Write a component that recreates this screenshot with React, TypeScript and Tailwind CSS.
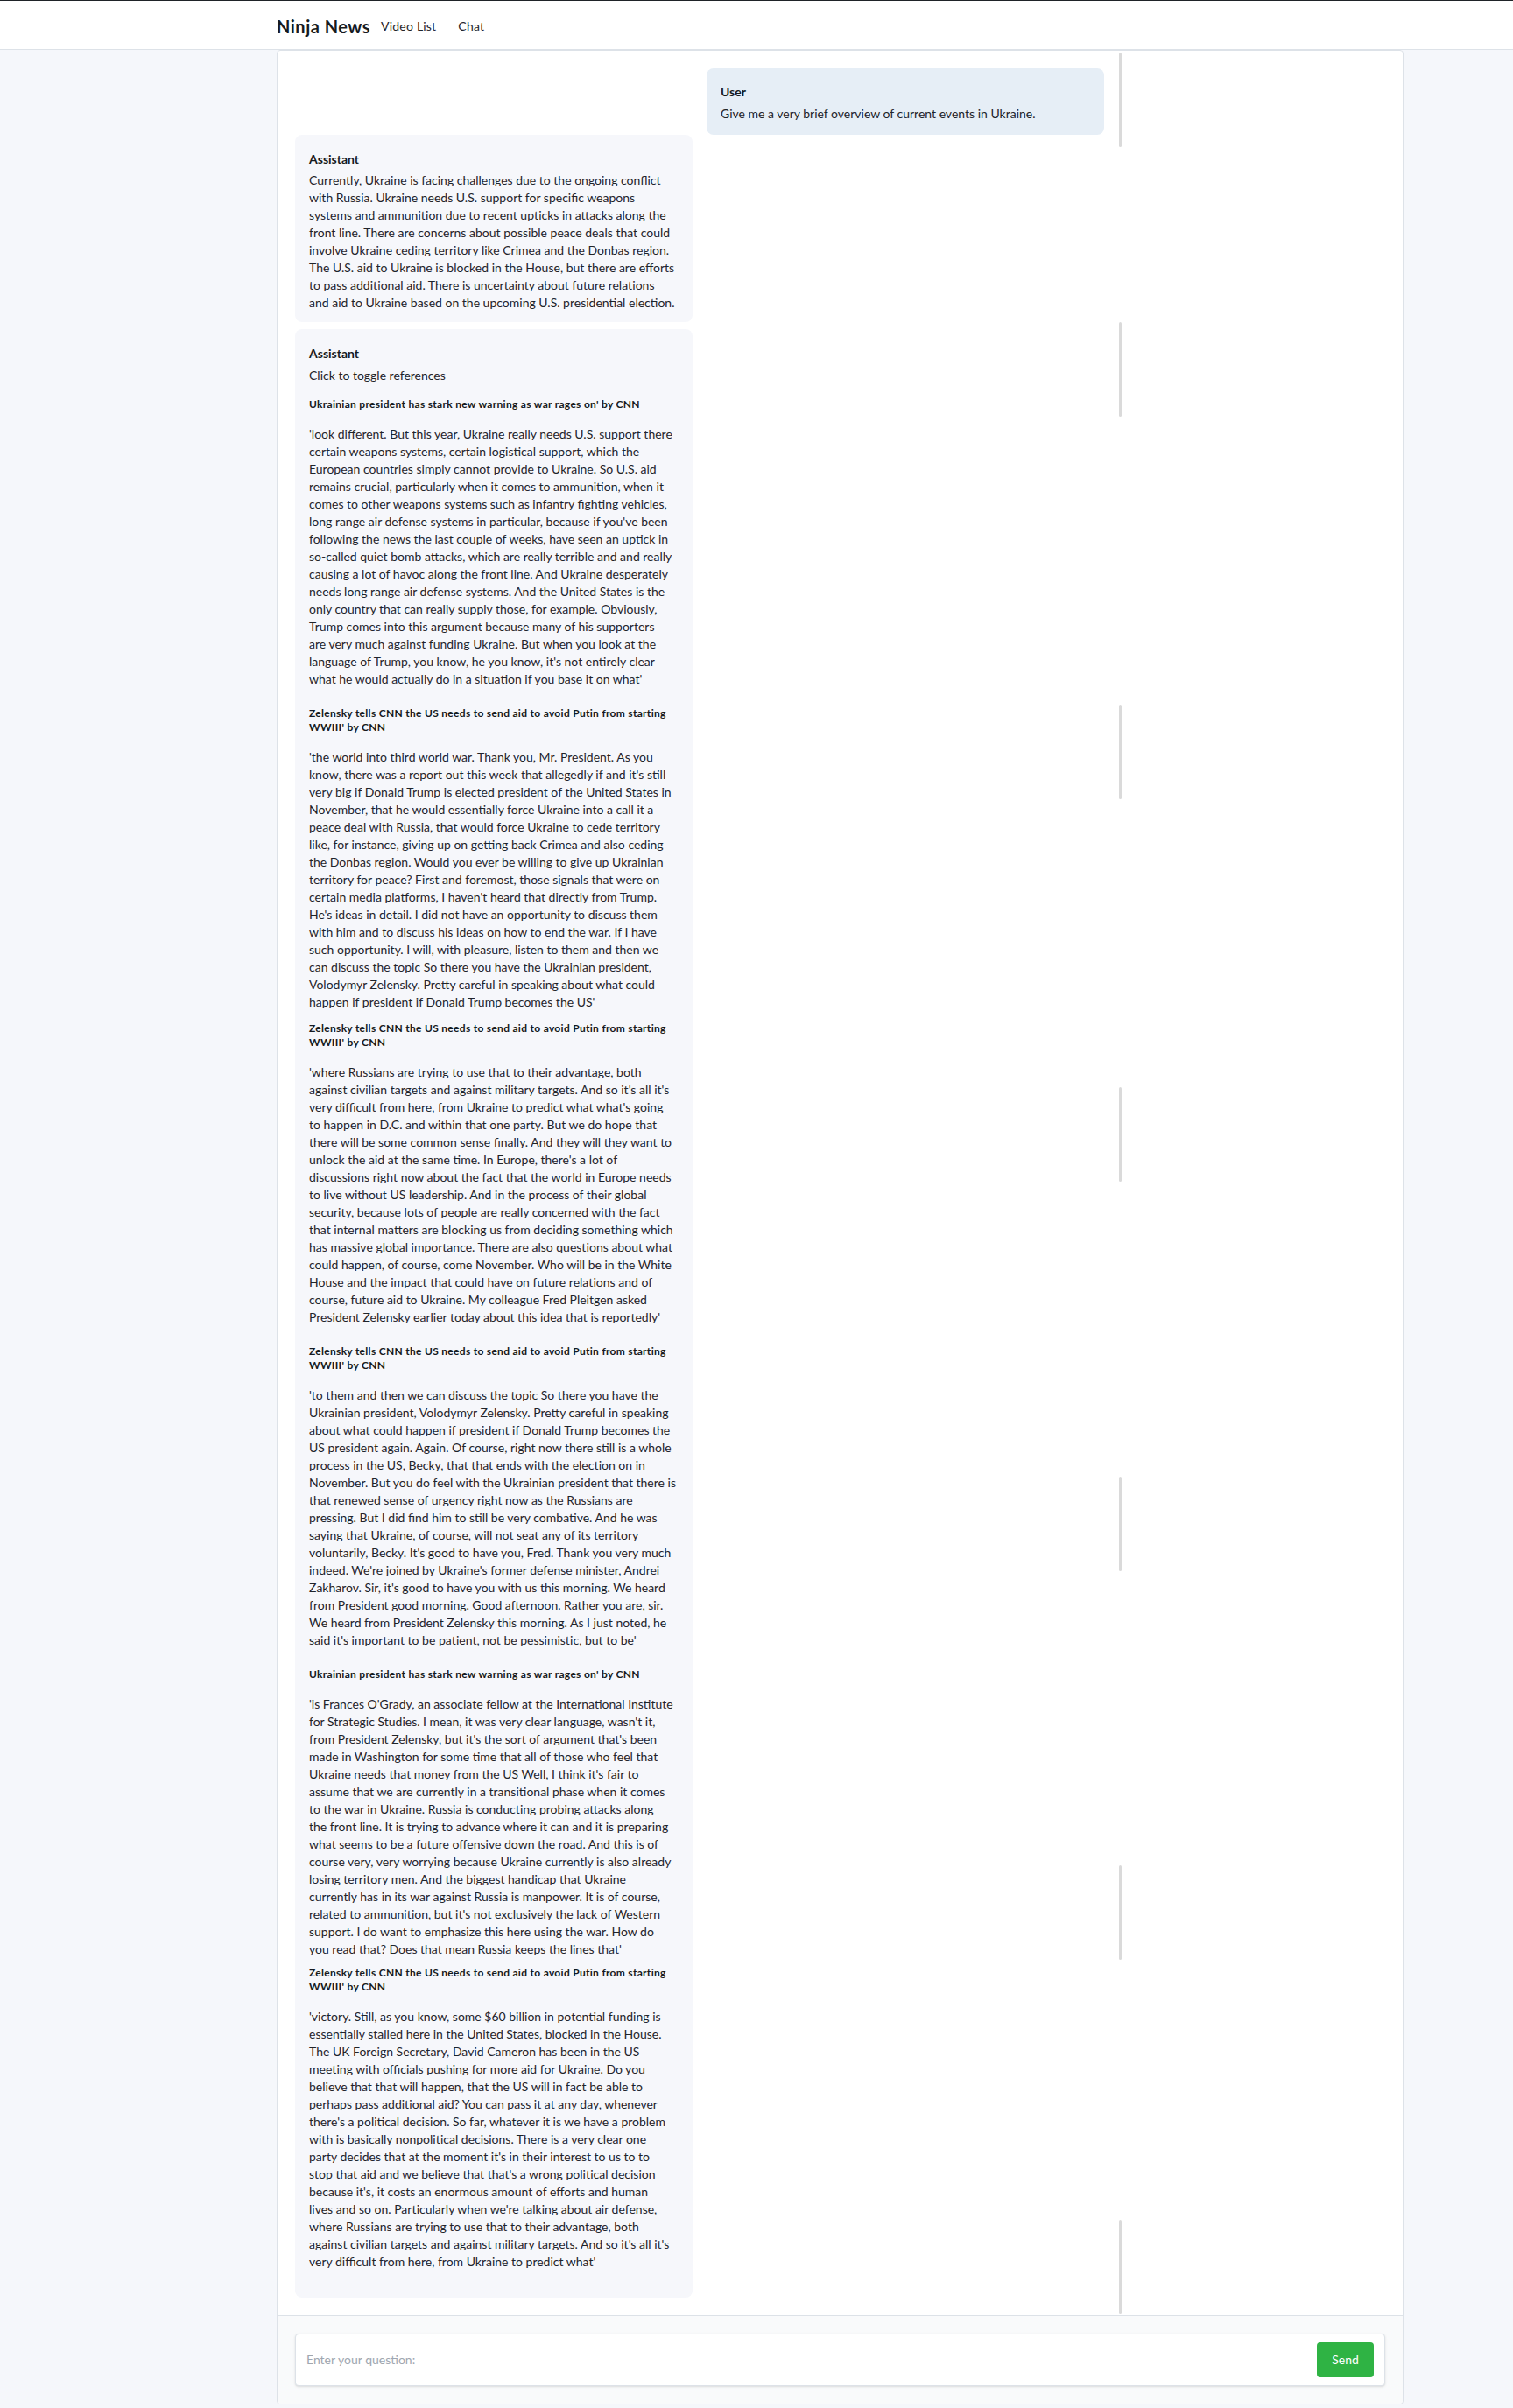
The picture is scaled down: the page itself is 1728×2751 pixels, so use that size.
import React from "react";

interface Reference {
  title: string[];
  gap: string;
  lines: string[];
}

const ZELENSKY_TITLE = [
  "Zelensky tells CNN the US needs to send aid to avoid Putin from starting",
  "WWIII' by CNN",
];
const STARK_TITLE = ["Ukrainian president has stark new warning as war rages on' by CNN"];

const summary = [
  "Currently, Ukraine is facing challenges due to the ongoing conflict",
  "with Russia. Ukraine needs U.S. support for specific weapons",
  "systems and ammunition due to recent upticks in attacks along the",
  "front line. There are concerns about possible peace deals that could",
  "involve Ukraine ceding territory like Crimea and the Donbas region.",
  "The U.S. aid to Ukraine is blocked in the House, but there are efforts",
  "to pass additional aid. There is uncertainty about future relations",
  "and aid to Ukraine based on the upcoming U.S. presidential election.",
];

const references: Reference[] = [
  {
    title: STARK_TITLE,
    gap: "mt-[15px]",
    lines: [
      "'look different. But this year, Ukraine really needs U.S. support there",
      "certain weapons systems, certain logistical support, which the",
      "European countries simply cannot provide to Ukraine. So U.S. aid",
      "remains crucial, particularly when it comes to ammunition, when it",
      "comes to other weapons systems such as infantry fighting vehicles,",
      "long range air defense systems in particular, because if you've been",
      "following the news the last couple of weeks, have seen an uptick in",
      "so-called quiet bomb attacks, which are really terrible and and really",
      "causing a lot of havoc along the front line. And Ukraine desperately",
      "needs long range air defense systems. And the United States is the",
      "only country that can really supply those, for example. Obviously,",
      "Trump comes into this argument because many of his supporters",
      "are very much against funding Ukraine. But when you look at the",
      "language of Trump, you know, he you know, it's not entirely clear",
      "what he would actually do in a situation if you base it on what'",
    ],
  },
  {
    title: ZELENSKY_TITLE,
    gap: "mt-[21px]",
    lines: [
      "'the world into third world war. Thank you, Mr. President. As you",
      "know, there was a report out this week that allegedly if and it's still",
      "very big if Donald Trump is elected president of the United States in",
      "November, that he would essentially force Ukraine into a call it a",
      "peace deal with Russia, that would force Ukraine to cede territory",
      "like, for instance, giving up on getting back Crimea and also ceding",
      "the Donbas region. Would you ever be willing to give up Ukrainian",
      "territory for peace? First and foremost, those signals that were on",
      "certain media platforms, I haven't heard that directly from Trump.",
      "He's ideas in detail. I did not have an opportunity to discuss them",
      "with him and to discuss his ideas on how to end the war. If I have",
      "such opportunity. I will, with pleasure, listen to them and then we",
      "can discuss the topic So there you have the Ukrainian president,",
      "Volodymyr Zelensky. Pretty careful in speaking about what could",
      "happen if president if Donald Trump becomes the US'",
    ],
  },
  {
    title: ZELENSKY_TITLE,
    gap: "mt-[12px]",
    lines: [
      "'where Russians are trying to use that to their advantage, both",
      "against civilian targets and against military targets. And so it's all it's",
      "very difficult from here, from Ukraine to predict what what's going",
      "to happen in D.C. and within that one party. But we do hope that",
      "there will be some common sense finally. And they will they want to",
      "unlock the aid at the same time. In Europe, there's a lot of",
      "discussions right now about the fact that the world in Europe needs",
      "to live without US leadership. And in the process of their global",
      "security, because lots of people are really concerned with the fact",
      "that internal matters are blocking us from deciding something which",
      "has massive global importance. There are also questions about what",
      "could happen, of course, come November. Who will be in the White",
      "House and the impact that could have on future relations and of",
      "course, future aid to Ukraine. My colleague Fred Pleitgen asked",
      "President Zelensky earlier today about this idea that is reportedly'",
    ],
  },
  {
    title: ZELENSKY_TITLE,
    gap: "mt-[21px]",
    lines: [
      "'to them and then we can discuss the topic So there you have the",
      "Ukrainian president, Volodymyr Zelensky. Pretty careful in speaking",
      "about what could happen if president if Donald Trump becomes the",
      "US president again. Again. Of course, right now there still is a whole",
      "process in the US, Becky, that that ends with the election on in",
      "November. But you do feel with the Ukrainian president that there is",
      "that renewed sense of urgency right now as the Russians are",
      "pressing. But I did find him to still be very combative. And he was",
      "saying that Ukraine, of course, will not seat any of its territory",
      "voluntarily, Becky. It's good to have you, Fred. Thank you very much",
      "indeed. We're joined by Ukraine's former defense minister, Andrei",
      "Zakharov. Sir, it's good to have you with us this morning. We heard",
      "from President good morning. Good afternoon. Rather you are, sir.",
      "We heard from President Zelensky this morning. As I just noted, he",
      "said it's important to be patient, not be pessimistic, but to be'",
    ],
  },
  {
    title: STARK_TITLE,
    gap: "mt-[21px]",
    lines: [
      "'is Frances O'Grady, an associate fellow at the International Institute",
      "for Strategic Studies. I mean, it was very clear language, wasn't it,",
      "from President Zelensky, but it's the sort of argument that's been",
      "made in Washington for some time that all of those who feel that",
      "Ukraine needs that money from the US Well, I think it's fair to",
      "assume that we are currently in a transitional phase when it comes",
      "to the war in Ukraine. Russia is conducting probing attacks along",
      "the front line. It is trying to advance where it can and it is preparing",
      "what seems to be a future offensive down the road. And this is of",
      "course very, very worrying because Ukraine currently is also already",
      "losing territory men. And the biggest handicap that Ukraine",
      "currently has in its war against Russia is manpower. It is of course,",
      "related to ammunition, but it's not exclusively the lack of Western",
      "support. I do want to emphasize this here using the war. How do",
      "you read that? Does that mean Russia keeps the lines that'",
    ],
  },
  {
    title: ZELENSKY_TITLE,
    gap: "mt-[9px]",
    lines: [
      "'victory. Still, as you know, some $60 billion in potential funding is",
      "essentially stalled here in the United States, blocked in the House.",
      "The UK Foreign Secretary, David Cameron has been in the US",
      "meeting with officials pushing for more aid for Ukraine. Do you",
      "believe that that will happen, that the US will in fact be able to",
      "perhaps pass additional aid? You can pass it at any day, whenever",
      "there's a political decision. So far, whatever it is we have a problem",
      "with is basically nonpolitical decisions. There is a very clear one",
      "party decides that at the moment it's in their interest to us to to",
      "stop that aid and we believe that that's a wrong political decision",
      "because it's, it costs an enormous amount of efforts and human",
      "lives and so on. Particularly when we're talking about air defense,",
      "where Russians are trying to use that to their advantage, both",
      "against civilian targets and against military targets. And so it's all it's",
      "very difficult from here, from Ukraine to predict what'",
    ],
  },
];

// scrollbar thumb captured once per screenshot tile
const thumbGaps = ["mt-[2px]", "mt-[200px]", "mt-[329px]", "mt-[329px]", "mt-[337px]", "mt-[336px]", "mt-[297px]"];

function Lines({ lines }: { lines: string[] }) {
  return (
    <div>
      {lines.map((line, i) => (
        <div key={i} className="whitespace-nowrap">
          {line}
        </div>
      ))}
    </div>
  );
}

function App() {
  return (
    <div
      className="min-h-screen bg-[#f5f7fb] text-[#1f242b] pb-[4px]"
      style={{ fontFamily: '"Segoe UI", Lato, "Liberation Sans", sans-serif' }}
    >
      <header className="h-[57px] bg-white border-t border-t-[#1f2328] border-b border-b-[#dde2e8]">
        <div className="ml-[316px] h-full flex items-center pt-[2px]">
          <span className="text-[20px] tracking-[0.5px] font-bold text-[#161a20]">Ninja News</span>
          <a className="ml-3 text-sm tracking-[0.2px]">Video List</a>
          <a className="ml-[25px] text-sm tracking-[0.2px]">Chat</a>
        </div>
      </header>

      <div className="ml-[316px] w-[1287px] bg-white border border-[#dde2e8] rounded-[4px]">
        <div className="flex border-b border-[#dde2e8]">
          <div className="w-[961px] p-5 text-sm leading-5">
            <div className="ml-auto mr-[-3px] w-[454px] rounded-lg bg-[#e6eef6] px-4 pt-[17px] pb-[14px]">
              <div className="font-bold text-[#161a20] mb-[5px]">User</div>
              <div>Give me a very brief overview of current events in Ukraine.</div>
            </div>

            <div className="w-[454px] rounded-lg bg-[#f6f7fb] px-4 pt-[18px] pb-3">
              <div className="font-bold text-[#161a20] mb-1">Assistant</div>
              <Lines lines={summary} />
            </div>

            <div className="mt-2 w-[454px] rounded-lg bg-[#f6f7fb] px-4 pt-[18px] pb-[31px]">
              <div className="font-bold text-[#161a20] mb-[5px]">Assistant</div>
              <div className="cursor-pointer">Click to toggle references</div>
              {references.map((ref, i) => (
                <div key={i} className={ref.gap}>
                  <div className="text-xs leading-4 font-bold tracking-[0.3px] text-[#161a20]">
                    {ref.title.map((t, j) => (
                      <div key={j} className="whitespace-nowrap">
                        {t}
                      </div>
                    ))}
                  </div>
                  <div className="mt-4">
                    <Lines lines={ref.lines} />
                  </div>
                </div>
              ))}
            </div>
          </div>

          <div className="flex flex-col">
            {thumbGaps.map((g, i) => (
              <div key={i} className={`${g} w-[3px] h-[108px] rounded-sm bg-[#dadada]`} />
            ))}
          </div>
        </div>

        <div className="bg-[#f9fafb] p-5 rounded-b-[4px]">
          <div className="h-[60px] flex items-center bg-white border border-[#dde2e8] rounded-[4px] shadow-sm pl-3 pr-3">
            <input
              className="flex-1 text-sm outline-none bg-transparent placeholder:text-[#a0a7b1]"
              placeholder="Enter your question:"
            />
            <button className="w-[65px] h-10 rounded-[4px] bg-[#2fb344] text-white text-sm">
              Send
            </button>
          </div>
        </div>
      </div>
    </div>
  );
}

export default App;
